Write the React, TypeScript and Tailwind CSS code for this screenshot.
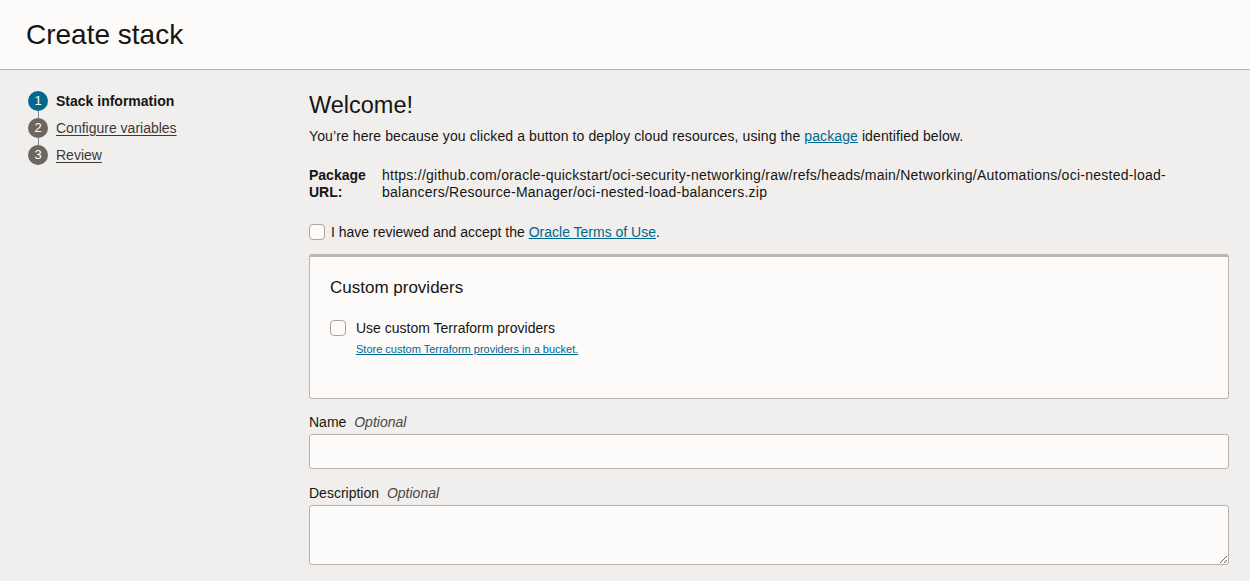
import React from "react";

const steps = [
  { n: 1, label: "Stack information", active: true },
  { n: 2, label: "Configure variables", active: false },
  { n: 3, label: "Review", active: false },
];

const Checkbox: React.FC = () => (
  <span className="inline-block w-4 h-4 shrink-0 rounded-[4px] border border-[#aaa49f] bg-[#fcfbfa]" />
);

const StepNav: React.FC = () => (
  <nav className="w-[309px] shrink-0 pl-[28px] pt-[21px]">
    {steps.map((s, i) => (
      <div key={s.n}>
        {i > 0 && <div className="ml-[9.5px] w-px h-[7px] bg-[#8c8681]" />}
        <div className="flex items-center h-5">
          <span
            className={`w-5 h-5 rounded-full flex items-center justify-center text-white text-[13px] ${
              s.active ? "bg-[#04688c]" : "bg-[#6c6560]"
            }`}
          >
            {s.n}
          </span>
          {s.active ? (
            <span className="ml-2 text-[14px] font-bold text-[#161513]">{s.label}</span>
          ) : (
            <a className="ml-2 text-[14px] text-[#3d3935] underline underline-offset-2">{s.label}</a>
          )}
        </div>
      </div>
    ))}
  </nav>
);

export default function App() {
  return (
    <div
      className="min-h-[581px] bg-[#f1efed] text-[#161513]"
      style={{ fontFamily: '"Liberation Sans", Arial, sans-serif' }}
    >
      <header className="h-[70px] flex items-center px-[26px] bg-[#fcfbfa] border-b border-[#bab5b0]">
        <h1 className="text-[28px] leading-[36px] font-normal">Create stack</h1>
      </header>

      <div className="flex">
        <StepNav />

        <main className="flex-1 pr-[21px] pt-[21px]">
          <h2 className="text-[23.5px] leading-[28px]">Welcome!</h2>
          <p className="mt-[7px] text-[14px] leading-[20px] tracking-[0.1px]">
            You’re here because you clicked a button to deploy cloud resources, using the{" "}
            <a className="text-[#00688c] underline">package</a> identified below.
          </p>

          <div className="mt-[21px] flex text-[14px] leading-[17px]">
            <div className="w-[73px] shrink-0 font-bold">
              Package
              <br />
              URL:
            </div>
            <div className="flex-1 tracking-[0.25px]">
              https://github.com/oracle-quickstart/oci-security-networking/raw/refs/heads/main/Networking/Automations/oci-nested-load-balancers/Resource-Manager/oci-nested-load-balancers.zip
            </div>
          </div>

          <label className="mt-[21px] flex items-center gap-[6px] text-[14px] leading-[20px]">
            <Checkbox />
            <span>
              I have reviewed and accept the{" "}
              <a className="text-[#00688c] underline">Oracle Terms of Use</a>.
            </span>
          </label>

          <section className="mt-[12px] bg-[#fcfbfa] border border-[#bcb6b1] border-t-[3px] rounded-[3px] px-[20px] pt-[19px] pb-[42px]">
            <h3 className="text-[17px] leading-[24px]">Custom providers</h3>
            <div className="mt-[18px] flex items-center gap-[10px] text-[14px] leading-[20px]">
              <Checkbox />
              <span>Use custom Terraform providers</span>
            </div>
            <div className="mt-[4px] pl-[26px] text-[11px] leading-[14px]">
              <a className="text-[#00688c] underline">Store custom Terraform providers in a bucket.</a>
            </div>
          </section>

          <div className="mt-[13px] text-[14px] leading-[20px]">
            Name <span className="ml-[4px] italic text-[#4b4743]">Optional</span>
          </div>
          <input
            className="mt-[2px] block w-full h-[35px] rounded-[3px] border border-[#b8b2ad] bg-[#fcfbfa] px-2 text-[14px] outline-none"
            type="text"
          />

          <div className="mt-[14px] text-[14px] leading-[20px]">
            Description <span className="ml-[4px] italic text-[#4b4743]">Optional</span>
          </div>
          <textarea className="mt-[2px] block w-full h-[60px] rounded-[3px] border border-[#b8b2ad] bg-[#fcfbfa] px-2 text-[14px] outline-none" />
        </main>
      </div>
    </div>
  );
}
